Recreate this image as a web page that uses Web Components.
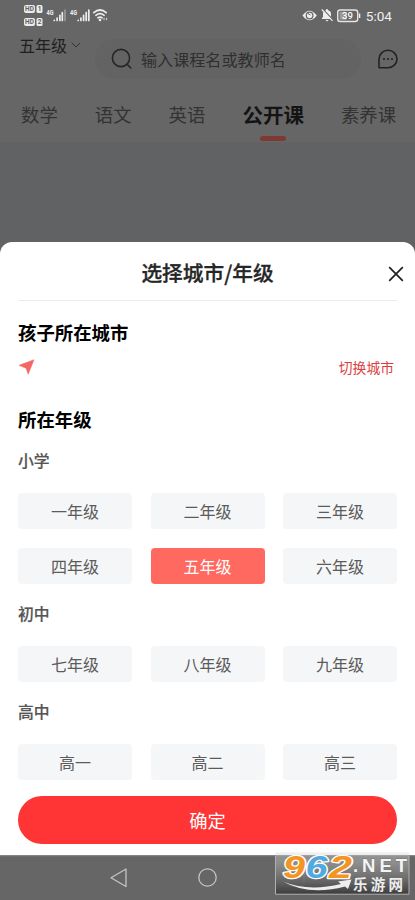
<!DOCTYPE html>
<html lang="zh-CN">
<head>
<meta charset="utf-8">
<title>选择城市/年级</title>
<style>
html,body{margin:0;height:100%}
body{width:415px;height:900px;overflow:hidden;background:#606264;font-family:"Noto Sans CJK SC",sans-serif;display:flex;flex-direction:column}
</style>
</head>
<body>
<status-bar></status-bar>
<app-header></app-header>
<subject-tabs>
  <subject-tab style="margin-left:21px">数学</subject-tab>
  <subject-tab style="margin-left:37px">语文</subject-tab>
  <subject-tab style="margin-left:37px">英语</subject-tab>
  <subject-tab active style="margin-left:37px">公开课</subject-tab>
  <subject-tab style="margin-left:37px">素养课</subject-tab>
</subject-tabs>
<bottom-sheet>
  <span slot="title">选择城市/年级</span>
  <section-title>孩子所在城市</section-title>
  <city-row>切换城市</city-row>
  <section-title>所在年级</section-title>
  <grade-group label="小学">
    <grade-chip>一年级</grade-chip><grade-chip>二年级</grade-chip><grade-chip>三年级</grade-chip>
    <grade-chip>四年级</grade-chip><grade-chip selected>五年级</grade-chip><grade-chip>六年级</grade-chip>
  </grade-group>
  <grade-group label="初中">
    <grade-chip>七年级</grade-chip><grade-chip>八年级</grade-chip><grade-chip>九年级</grade-chip>
  </grade-group>
  <grade-group label="高中">
    <grade-chip>高一</grade-chip><grade-chip>高二</grade-chip><grade-chip>高三</grade-chip>
  </grade-group>
  <confirm-button slot="footer">确定</confirm-button>
</bottom-sheet>
<nav-bar></nav-bar>
<site-badge></site-badge>

<script>
function define(name, html) {
  const t = document.createElement('template');
  t.innerHTML = html;
  customElements.define(name, class extends HTMLElement {
    constructor() {
      super();
      this.attachShadow({mode: 'open'}).appendChild(t.content.cloneNode(true));
    }
    connectedCallback() {
      const label = this.shadowRoot.querySelector('[data-label]');
      if (label) label.textContent = this.getAttribute('label');
    }
  });
}

define('status-bar', `
<style>
:host{display:flex;height:32px;flex:none;background:#666;box-sizing:border-box;padding:4px 23px 0 24px;justify-content:space-between}
svg{display:block;flex:none}
.r{display:flex}
.t{font:13.6px/24px Roboto,sans-serif;color:#f0f0f0;margin-left:4.500px}
</style>
<svg width="90" height="26" viewBox="24 4 90 26">
  <g fill="#ececec"><rect x="24" y="5" width="11" height="8" rx="2"/><rect x="36.500" y="5" width="6" height="8" rx="1.500"/><rect x="24" y="18" width="11" height="8" rx="2"/><rect x="36.500" y="18" width="6" height="8" rx="1.500"/></g>
  <g font-family="Roboto" font-weight="700" font-size="6.500" fill="#606060"><text x="25" y="11.400" textLength="9">HD</text><text x="37.700" y="11.400">1</text><text x="25" y="24.400" textLength="9">HD</text><text x="37.700" y="24.400">2</text></g>
  <g font-family="Roboto" font-weight="700" font-size="7" fill="#eee"><text x="46.500" y="15" textLength="7" lengthAdjust="spacingAndGlyphs">4G</text><text x="70" y="15" textLength="7" lengthAdjust="spacingAndGlyphs">4G</text></g>
  <g stroke="#eee" stroke-width="1.700" stroke-linecap="round"><path d="M54.300 20.300v.2M57.100 18v2.500M59.900 15.300v5.200M62.300 12.500v8M78.200 20.300v.2M80.900 18v2.500M83.600 15.300v5.200M86.200 12.500v8M88.800 10.200v10.300"/><path stroke="#999" d="M65 10.200v10.300"/></g>
  <g fill="none" stroke="#eee" stroke-width="1.700" stroke-linecap="round"><path d="M93.800 12.700Q100 7.300 106.200 12.700M95.900 15.300Q100 11.900 104.100 15.300M98 17.800Q100 16.500 102 17.800"/></g>
  <circle cx="100" cy="20" r="1.300" fill="#eee"/><path d="M103 19l1.500-1.500v3zM107.500 19L106 17.500v3z" fill="#ddd"/>
</svg>
<div class="r">
<svg width="59" height="24" viewBox="303 4 59 24">
  <path d="M303.500 15.500Q310.500 6 317.800 15.500Q310.500 25 303.500 15.500z" fill="#eee"/><circle cx="310.600" cy="15.500" r="3.300" fill="none" stroke="#666" stroke-width="1.300"/><path d="M309 13.500l2.500 1.500" stroke="#666"/>
  <path d="M323 19v-1l1-1v-3q0-3 3-3.700v-1h2v1q3 .7 3 3.700v3l1 1v1zM326.500 20h3l-1.500 1.500z" fill="#eee"/>
  <path d="M324 9.500l10.500 11" stroke="#666" stroke-width="1.500"/><path d="M322.800 9.500L333.500 20.800" stroke="#eee" stroke-width="1.200"/>
  <rect x="338.700" y="10" width="20" height="11.500" rx="2.500" fill="none" stroke="#e5e5e5" stroke-width="1.400"/><rect x="340.500" y="11.800" width="7" height="8" fill="#999"/>
  <path d="M360.600 13.500v4.500" stroke="#eee" stroke-width="1.400"/>
  <text x="343" y="19" font-family="Roboto" font-weight="500" font-size="9.500" fill="#fff">39</text>
</svg><span class="t">5:04</span></div>`);

define('app-header', `
<style>
:host{display:flex;height:58px;flex:none;background:#666;color:#1f1f1f}
.g{display:flex;height:26px;margin-left:19px;width:76px;font-size:16px;line-height:26px;align-items:center}
.g svg{margin-left:4px}
.s{margin-top:7px;width:266px;height:40px;border-radius:20px;background:#636363;display:flex;align-items:center;box-sizing:border-box;padding-left:16px;color:#2f2f2f;font-size:16.100px;line-height:40px}
.s svg{margin-right:8px}
.c{margin:17px 0 0 17px}
</style>
<div class="g">五年级<svg width="10" height="8" viewBox="0 0 10 8" fill="none" stroke="#333"><path d="M.8 1.800L5 6l4.200-4.200"/></svg></div>
<div class="s"><svg width="22" height="22" viewBox="0 0 22 22" fill="none" stroke="#262626" stroke-width="1.600" stroke-linecap="round"><circle cx="10" cy="10" r="8.600"/><path d="M16.300 16.500l3.500 3.500"/></svg><span>输入课程名或教师名</span></div>
<svg class="c" width="20" height="20" viewBox="0 0 20 20"><path d="M1 18.300V10a9 8.700 0 1 1 9 8.700H1.500Q1 18.700 1 18.300z" fill="none" stroke="#222" stroke-width="1.600"/><g fill="#222"><circle cx="6" cy="10" r="1.100"/><circle cx="10" cy="10" r="1.100"/><circle cx="14" cy="10" r="1.100"/></g></svg>`);

define('subject-tabs', `
<style>:host{display:flex;height:52px;flex:none;background:#666;white-space:nowrap}</style><slot></slot>`);

define('subject-tab', `
<style>
:host{display:flex;flex-direction:column;align-items:center;font-size:18.400px;line-height:48px;color:#333}
:host([active]){font-size:20.500px;font-weight:700;color:#141414}
i{display:none;width:26px;height:5px;border-radius:3px;background:#7c3a33;margin-top:-2px}
:host([active]) i{display:block}
</style><slot></slot><i></i>`);

define('bottom-sheet', `
<style>
:host{display:flex;flex-direction:column;box-sizing:border-box;height:613px;flex:none;margin-top:100px;background:#fff;border-radius:12px 12px 0 0;padding:0 18px}
header{display:grid;grid-template-columns:1fr auto 1fr;height:58px;align-items:center;border-bottom:1px solid #ebebeb;flex:none;font-size:20.700px;font-weight:500;color:#262626;line-height:60px;margin-bottom:14px}
svg{justify-self:end;grid-column:3;margin-right:-7px;margin-top:3px}
.t{grid-column:2;-webkit-text-stroke:.3px #262626}
</style>
<header><span class="t"><slot name="title"></slot></span><svg width="16" height="16" viewBox="0 0 16 16" stroke="#222" stroke-width="1.700"><path d="M1.200 1.200l13.600 13.600M14.800 1.200L1.200 14.800"/></svg></header>
<slot></slot><slot name="footer"></slot>`);

define('section-title', `
<style>:host{display:block;flex:none;height:34px;line-height:34px;font-size:18.400px;font-weight:700;color:#000}</style><slot></slot>`);

define('city-row', `
<style>:host{display:flex;flex:none;height:36px;margin-bottom:17px;justify-content:space-between;align-items:center;font-size:13.800px;color:#dc3e3e;padding-right:3px}
svg{margin-top:-1px}</style>
<svg width="17" height="16" viewBox="0 0 17 16"><path d="M1 6.300L16 .7 10.200 15.300 8 9.300z" fill="#f46764" stroke="#f46764" stroke-width=".5" stroke-linejoin="round"/></svg><span><slot></slot></span>`);

define('grade-group', `
<style>
:host{display:block;flex:none}
:host([label="小学"]){margin-top:1px}
h3{margin:0;font-size:15.800px;font-weight:500;line-height:30px;height:30px;color:#555;padding-top:9px;-webkit-text-stroke:.2px #555}
.g{display:grid;grid-template-columns:repeat(3,114px);justify-content:space-between;gap:18.500px;margin-top:17px;padding:0 0 6px}
</style><h3 data-label></h3><div class="g"><slot></slot></div>`);

define('grade-chip', `
<style>
:host{display:flex;height:36px;border-radius:4px;background:#f5f6f8;color:#5b5b5b;font-size:16px;line-height:36px;align-items:center;justify-content:center}
:host([selected]){background:#ff695f;color:#fff}
</style><slot></slot>`);

define('confirm-button', `
<style>:host{display:flex;flex:none;height:48px;margin-top:10px;border-radius:24px;background:#ff3434;color:#fff;font-size:18.300px;line-height:48px;align-items:center;justify-content:center}</style><slot></slot>`);

define('nav-bar', `
<style>:host{display:block;flex:none;height:45px;background:#666}svg{display:block}</style>
<svg width="415" height="45" viewBox="0 855 415 45" fill="none" stroke="#c4c4c4" stroke-width="1.300" stroke-linejoin="round"><path d="M0 855.500H415" stroke="#858585"/><path d="M126 869V886.500L111 877.700z"/><circle cx="207.500" cy="877.500" r="8.700"/><rect x="288" y="869.500" width="16" height="16" rx="1" stroke="#999"/></svg>`);

define('site-badge', `
<style>:host{position:absolute;left:275px;top:840px;width:135px;height:55px}svg{display:block}</style>
<svg width="135" height="55" viewBox="0 -10 135 55">
  <defs><linearGradient id="a" x2="0" y2="1"><stop stop-color="#ddd" stop-opacity=".3"/><stop offset=".3" stop-color="#999" stop-opacity=".7"/><stop offset="1" stop-color="#3c3c3c"/></linearGradient></defs>
  <rect x=".5" y="2" width="133.500" height="42" fill="url(#a)"/><path d="M.5 6V44.200H134V6" fill="none" stroke="#b0b0b0"/>
  <g font-family="Liberation Sans" font-weight="700" font-style="italic" font-size="31.500" stroke="#fff" stroke-width="2.600" stroke-linejoin="round" paint-order="stroke">
    <text x="8" y="27.500" textLength="22" lengthAdjust="spacingAndGlyphs" fill="#f49422">9</text><text x="30.500" y="27.500" textLength="22" lengthAdjust="spacingAndGlyphs" fill="#51a9df">6</text><text x="54" y="27.500" textLength="23" lengthAdjust="spacingAndGlyphs" fill="#f49422">2</text></g>
  <text x="78" y="22" font-family="Liberation Sans" font-weight="700" font-size="18.500" textLength="54" fill="#f4f4f4" stroke="#777" stroke-width=".8" paint-order="stroke">.NET</text>
  <path d="M8 31.500Q33 42 66 34L63 31.500 76.500 29.500 73 39 70 36.500Q34 46 8 31.500z" fill="#eee"/>
  <text x="78" y="39.500" font-family="Noto Sans CJK SC" font-weight="700" font-size="14.500" textLength="50" fill="#eee">乐游网</text>
</svg>`);
</script>
</body>
</html>
